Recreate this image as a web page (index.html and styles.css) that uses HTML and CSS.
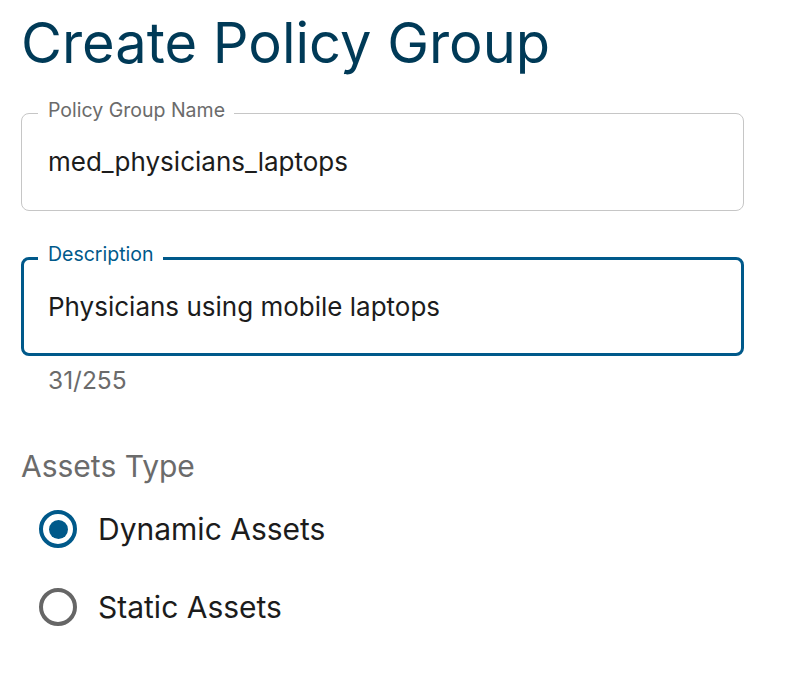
FILE: index.html
```html
<!DOCTYPE html>
<html>
<head>
<meta charset="utf-8">
<link rel="stylesheet" href="styles.css">
</head>
<body>
<div class="page">
  <h1 class="title">Create Policy Group</h1>
  <div class="field">
    <span class="field-label">Policy Group Name</span>
    <div class="field-value">med_physicians_laptops</div>
  </div>
  <div class="field field-focused">
    <span class="field-label">Description</span>
    <div class="field-value">Physicians using mobile laptops</div>
  </div>
  <div class="counter">31/255</div>
  <div class="group-label">Assets Type</div>
  <div class="radio-list">
    <div class="radio-row">
      <span class="radio radio-checked"><span class="radio-dot"></span></span>
      <span class="radio-text">Dynamic Assets</span>
    </div>
    <div class="radio-row">
      <span class="radio"></span>
      <span class="radio-text">Static Assets</span>
    </div>
  </div>
</div>
</body>
</html>
```
FILE: styles.css
```css
html, body {
  margin: 0;
  padding: 0;
  background: #ffffff;
}
body {
  font-family: Inter, "Noto Sans", sans-serif;
}
.page {
  padding: 9px 0 0 21px;
  width: 723px;
  display: flex;
  flex-direction: column;
}
.title {
  margin: 0;
  font-size: 56px;
  font-weight: 400;
  line-height: 68px;
  color: #003a57;
}
.field {
  position: relative;
  margin-top: 36px;
  height: 98px;
  box-sizing: border-box;
  border: 1px solid #c6c6c6;
  border-radius: 8px;
  padding-left: 26px;
  display: flex;
  align-items: center;
}
.field-label {
  position: absolute;
  top: -16.5px;
  left: 16px;
  padding: 0 9px 0 10px;
  background: #ffffff;
  font-size: 19.5px;
  line-height: 24px;
  color: #6b6b6b;
}
.field-value {
  font-size: 26px;
  line-height: 32px;
  color: #1c1c1c;
}
.field-focused {
  margin-top: 46px;
  height: 99px;
  border: 3px solid #00598a;
  padding-left: 24px;
}
.field-focused .field-label {
  top: -18.5px;
  left: 14px;
  color: #00598a;
}
.counter {
  margin: 10px 0 0 27px;
  font-size: 24.5px;
  line-height: 29px;
  color: #6b6b6b;
}
.group-label {
  margin-top: 53px;
  font-size: 30px;
  line-height: 36px;
  color: #6b6b6b;
}
.radio-list {
  display: flex;
  flex-direction: column;
  gap: 40px;
  margin-top: 26px;
  padding-left: 18px;
}
.radio-row {
  display: flex;
  align-items: center;
  gap: 21px;
  height: 38px;
}
.radio {
  width: 38px;
  height: 38px;
  box-sizing: border-box;
  border: 4px solid #666666;
  border-radius: 50%;
  display: flex;
  align-items: center;
  justify-content: center;
}
.radio-checked {
  border-color: #00598a;
}
.radio-dot {
  width: 19px;
  height: 19px;
  border-radius: 50%;
  background: #00598a;
}
.radio-text {
  font-size: 30px;
  line-height: 36px;
  color: #1c1c1c;
}
```
